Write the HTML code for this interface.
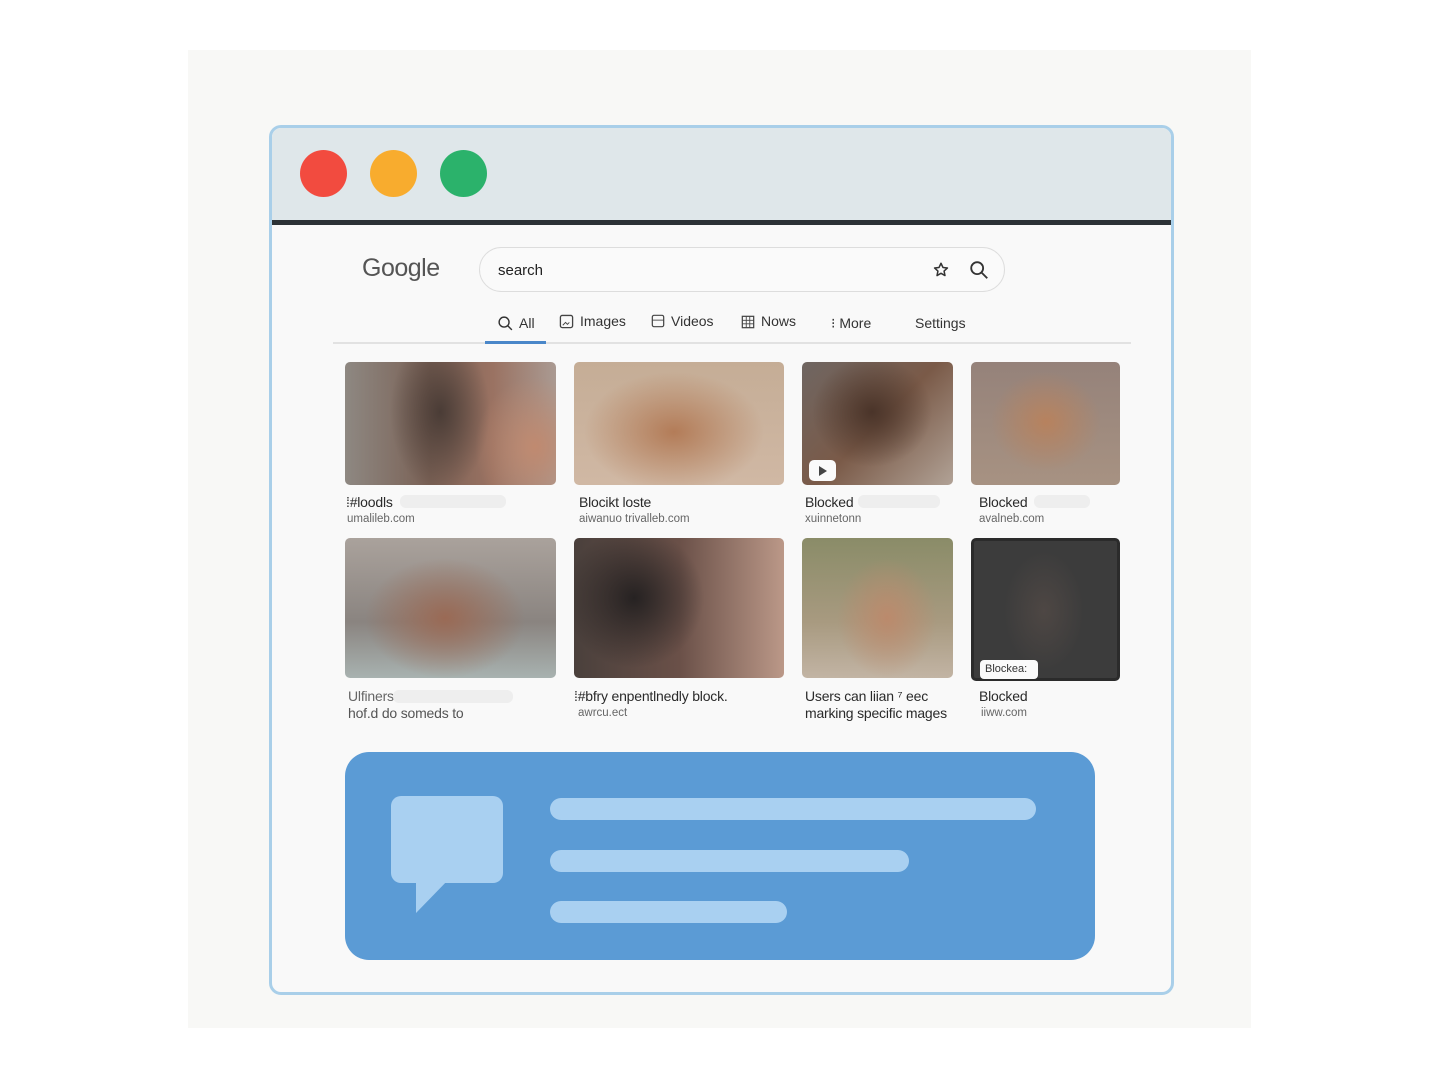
<!DOCTYPE html>
<html><head><meta charset="utf-8"><style>
*{margin:0;padding:0;box-sizing:border-box}
body{width:1440px;height:1080px;background:#fff;position:relative;overflow:hidden;font-family:"Liberation Sans",sans-serif;color:#333}
.a{position:absolute}
.img{position:absolute;border-radius:5px;overflow:hidden}
.img>i{position:absolute;left:-20px;top:-20px;right:-20px;bottom:-20px;filter:blur(10px);background:inherit}
.t{position:absolute;font-size:14px;color:#2a2a2a;letter-spacing:-0.2px}
.u{position:absolute;font-size:11.5px;color:#666}
.gb{position:absolute;height:13px;background:#eeeeee;border-radius:6px}
.bar{position:absolute;height:22px;background:#a9d0f1;border-radius:11px}
.tab{position:absolute;top:313px;font-size:14px;color:#333}
</style></head><body>
<div class="a" style="left:188px;top:50px;width:1063px;height:978px;background:#f8f8f6"></div>
<div class="a" style="left:269px;top:125px;width:905px;height:870px;border:3px solid #a9cfe9;border-radius:12px;background:#f9f9f9;overflow:hidden">
  <div class="a" style="left:0;top:0;width:100%;height:92px;background:#dfe7ea"></div>
  <div class="a" style="left:0;top:92px;width:100%;height:5px;background:#2c3236"></div>
</div>
<div class="a" style="left:300px;top:150px;width:47px;height:47px;border-radius:50%;background:#f24b3f"></div>
<div class="a" style="left:370px;top:150px;width:47px;height:47px;border-radius:50%;background:#f8ac2e"></div>
<div class="a" style="left:440px;top:150px;width:47px;height:47px;border-radius:50%;background:#2bb26b"></div>

<div class="a" style="left:362px;top:254px;font-size:25px;color:#555;letter-spacing:-0.5px">Google</div>
<div class="a" style="left:479px;top:247px;width:526px;height:45px;border:1px solid #ddd;border-radius:23px;background:#fafafa"></div>
<div class="a" style="left:498px;top:262px;font-size:15px;color:#222">search</div>
<svg class="a" style="left:932px;top:261px" width="18" height="18" viewBox="0 0 24 24"><path d="M12 3l2.6 5.6 6 .7-4.5 4.1 1.2 6-5.3-3-5.3 3 1.2-6L3.4 9.3l6-.7z" fill="none" stroke="#333" stroke-width="2" stroke-linejoin="round"/></svg>
<svg class="a" style="left:968px;top:259px" width="22" height="22" viewBox="0 0 24 24"><circle cx="10" cy="10" r="6.5" fill="none" stroke="#333" stroke-width="2"/><path d="M15 15l6 6" stroke="#333" stroke-width="2"/></svg>

<svg class="a" style="left:497px;top:315px" width="17" height="17" viewBox="0 0 24 24"><circle cx="10" cy="10" r="7" fill="none" stroke="#333" stroke-width="2"/><path d="M15 15l6 6" stroke="#333" stroke-width="2"/></svg>
<div class="tab" style="left:519px;top:315px">All</div>
<svg class="a" style="left:559px;top:314px" width="15" height="15" viewBox="0 0 16 16"><rect x="1.5" y="1.5" width="13" height="13" rx="2" fill="none" stroke="#444" stroke-width="1.4"/><path d="M4 12l3-3 2 2 2-2" stroke="#444" fill="none"/></svg>
<div class="tab" style="left:580px">Images</div>
<svg class="a" style="left:651px;top:314px" width="14" height="14" viewBox="0 0 16 16"><rect x="1.5" y="1.5" width="13" height="13" rx="2" fill="none" stroke="#444" stroke-width="1.4"/><path d="M1.5 7h13" stroke="#444"/></svg>
<div class="tab" style="left:671px">Videos</div>
<svg class="a" style="left:741px;top:315px" width="14" height="14" viewBox="0 0 16 16"><rect x="1.5" y="1.5" width="13" height="13" fill="none" stroke="#444" stroke-width="1.4"/><path d="M1.5 6h13M1.5 10h13M6 1.5v13M10 1.5v13" stroke="#444"/></svg>
<div class="tab" style="left:761px">Nows</div>
<div class="tab" style="left:831px;top:315px">⁝ More</div>
<div class="tab" style="left:915px;top:315px">Settings</div>
<div class="a" style="left:333px;top:342px;width:798px;height:2px;background:#e2e2e2"></div>
<div class="a" style="left:485px;top:341px;width:61px;height:3px;background:#4a87c9"></div>

<div class="img" style="left:345px;top:362px;width:211px;height:123px;background:radial-gradient(ellipse 60px 70px at 190px 85px,#c08a70,transparent),radial-gradient(ellipse 50px 80px at 95px 50px,#4a3c36,transparent),linear-gradient(90deg,#8e8882,#7a6155 40%,#9a7262 70%,#aa9a92)"></div>
<div class="img" style="left:574px;top:362px;width:210px;height:123px;background:radial-gradient(ellipse 90px 60px at 100px 70px,#b37c58,transparent),linear-gradient(#c5ad96,#d0b8a4)"></div>
<div class="img" style="left:802px;top:362px;width:151px;height:123px;background:radial-gradient(ellipse 60px 55px at 70px 50px,#4a3429,transparent),linear-gradient(135deg,#6f6662,#7a5a48 50%,#b1a296)"></div>
<div class="a" style="left:809px;top:460px;width:27px;height:21px;background:#fafafa;border-radius:5px"></div>
<div class="a" style="left:819px;top:466px;width:0;height:0;border-left:8px solid #444;border-top:5px solid transparent;border-bottom:5px solid transparent"></div>
<div class="img" style="left:971px;top:362px;width:149px;height:123px;background:radial-gradient(ellipse 55px 50px at 75px 60px,#b7825e,transparent),linear-gradient(#95827a,#a79282)"></div>

<div class="img" style="left:345px;top:538px;width:211px;height:140px;background:radial-gradient(ellipse 80px 60px at 100px 80px,#9a6a55,transparent),linear-gradient(#aaa29c,#8a8480 60%,#a8b2b0)"></div>
<div class="img" style="left:574px;top:538px;width:210px;height:140px;background:radial-gradient(ellipse 70px 70px at 60px 60px,#262222,transparent),linear-gradient(90deg,#4a403c,#6a5048 50%,#bb9888)"></div>
<div class="img" style="left:802px;top:538px;width:151px;height:140px;background:radial-gradient(ellipse 50px 60px at 85px 80px,#bb8a6c,transparent),linear-gradient(#8a8c68,#a89a80 60%,#c2b4a4)"></div>
<div class="img" style="left:971px;top:538px;width:149px;height:143px;border:3px solid #2b2b2b;background:radial-gradient(ellipse 40px 60px at 70px 70px,#4e4744,transparent),#3c3c3c"></div>
<div class="a" style="left:980px;top:660px;width:58px;height:19px;background:#fafafa;border-radius:4px;font-size:11px;color:#333;padding:3px 5px">Blockea:</div>

<div class="t" style="left:346px;top:494px">⁞#loodls</div><div class="gb" style="left:400px;top:495px;width:106px"></div>
<div class="u" style="left:347px;top:513px">umalileb.com</div>
<div class="t" style="left:579px;top:494px">Blocikt loste</div>
<div class="u" style="left:579px;top:513px">aiwanuo trivalleb.com</div>
<div class="t" style="left:805px;top:494px">Blocked</div><div class="gb" style="left:858px;top:495px;width:82px"></div>
<div class="u" style="left:805px;top:513px">xuinnetonn</div>
<div class="t" style="left:979px;top:494px">Blocked</div><div class="gb" style="left:1034px;top:495px;width:56px"></div>
<div class="u" style="left:979px;top:513px">avalneb.com</div>

<div class="t" style="left:348px;top:688px;color:#666">Ulfiners</div><div class="gb" style="left:393px;top:690px;width:120px"></div>
<div class="t" style="left:348px;top:705px;color:#555">hof.d do someds to</div>
<div class="t" style="left:574px;top:688px">⁞#bfry enpentlnedly block.</div>
<div class="u" style="left:578px;top:707px">awrcu.ect</div>
<div class="t" style="left:805px;top:688px">Users can liian ⁷ eec</div>
<div class="t" style="left:805px;top:705px">marking specific mages</div>
<div class="t" style="left:979px;top:688px">Blocked</div>
<div class="u" style="left:981px;top:707px">iiww.com</div>

<div class="a" style="left:345px;top:752px;width:750px;height:208px;background:#5b9bd5;border-radius:24px"></div>
<div class="a" style="left:391px;top:796px;width:112px;height:87px;background:#a9d0f1;border-radius:10px"></div>
<svg class="a" style="left:414px;top:878px" width="40" height="38" viewBox="0 0 40 38"><path d="M2 0v35L36 0z" fill="#a9d0f1"/></svg>
<div class="bar" style="left:550px;top:798px;width:486px"></div>
<div class="bar" style="left:550px;top:850px;width:359px"></div>
<div class="bar" style="left:550px;top:901px;width:237px"></div>
</body></html>
